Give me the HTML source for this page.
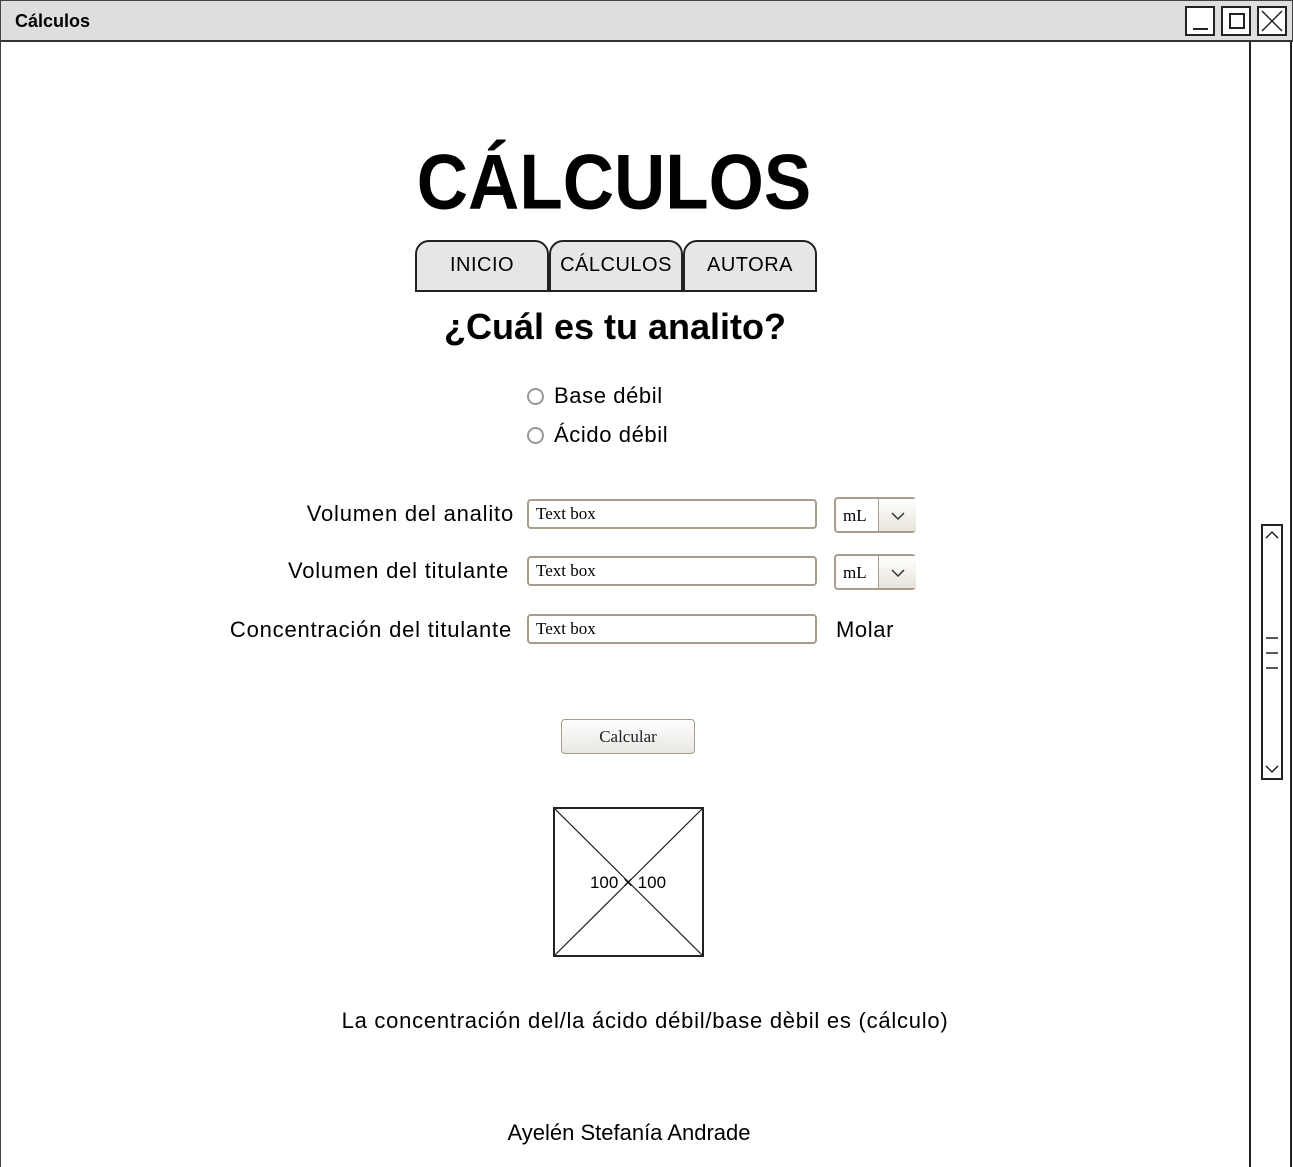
<!DOCTYPE html>
<html><head><meta charset="utf-8"><style>
*{margin:0;padding:0;box-sizing:border-box}
body{width:1293px;height:1167px;background:#fff;position:relative;overflow:hidden;font-family:"Comic Sans MS","Liberation Sans",sans-serif;color:#000}
.a{position:absolute}
.hand{font-family:"Comic Sans MS","Liberation Sans",sans-serif}
.tb{position:absolute;left:527px;width:290px;height:30px;border:2px solid #a89d8c;border-radius:4px;font-family:"Liberation Serif",serif;font-size:17px;padding:3px 0 0 7px;background:#fff}
.sel{position:absolute;left:834px;width:82px;height:36px;border:2px solid #a89d8c;border-radius:4px;background:#fff;font-family:"Liberation Serif",serif;font-size:17px}
.sel span{position:absolute;left:7px;top:7px}
.sel i{position:absolute;left:42px;top:0;width:38px;height:32px;border-left:1px solid #a89d8c;background:linear-gradient(#fff,#e8e4dc)}
.lbl{position:absolute;font-size:22px;text-align:right;width:320px;letter-spacing:0.8px}
.tab{position:absolute;top:240px;height:52px;border:2px solid #222;border-bottom:2px solid #222;border-radius:14px 14px 0 0;background:#e6e6e6;font-size:20px;text-align:center;padding-top:12px;letter-spacing:0.5px}
</style></head><body>
<div class="a" style="left:0;top:0;width:1293px;height:42px;background:#dedede;border:1px solid #444;border-bottom:2px solid #333"></div>
<div class="a hand" style="left:15px;top:11px;font-size:18px;font-weight:bold">Cálculos</div>
<div class="a" style="left:1185px;top:6px;width:30px;height:30px;border:2px solid #222;background:#fff"><div class="a" style="left:6px;top:20px;width:15px;height:2px;background:#222"></div></div>
<div class="a" style="left:1221px;top:6px;width:30px;height:30px;border:2px solid #222;background:#fff"><div class="a" style="left:6px;top:5px;width:16px;height:16px;border:2px solid #222"></div></div>
<div class="a" style="left:1257px;top:6px;width:30px;height:30px;border:2px solid #222;background:#fff"><svg width="26" height="26" class="a" style="left:0;top:0"><path d="M3 3L23 23M23 3L3 23" stroke="#222" stroke-width="1.5"/></svg></div>
<div class="a" style="left:0;top:42px;width:1px;height:1125px;background:#444"></div>
<div class="a" style="left:1249px;top:42px;width:2px;height:1125px;background:#222"></div>
<div class="a" style="left:1290px;top:42px;width:2px;height:1125px;background:#222"></div>
<div class="a" style="left:1261px;top:524px;width:22px;height:256px;border:2px solid #222"><svg width="18" height="252" class="a" style="left:0;top:0"><path d="M3 12L9 6L15 12M3 240L9 246L15 240M3 112H15M3 127H15M3 142H15" stroke="#222" stroke-width="1.5" fill="none"/></svg></div>

<div class="a" style="left:300px;top:142px;width:628px;text-align:center;font-family:'Liberation Sans',sans-serif;font-weight:bold;font-size:71px;transform:scaleY(1.1)">CÁLCULOS</div>
<div class="tab" style="left:415px;width:134px">INICIO</div>
<div class="tab" style="left:549px;width:134px">CÁLCULOS</div>
<div class="tab" style="left:683px;width:134px">AUTORA</div>
<div class="a" style="left:300px;top:306px;width:630px;text-align:center;font-family:'Liberation Sans',sans-serif;font-weight:bold;font-size:36px">¿Cuál es tu analito?</div>

<div class="a" style="left:527px;top:388px;width:17px;height:17px;border:2px solid #999;border-radius:50%"></div>
<div class="a" style="left:554px;top:383px;font-size:22px;letter-spacing:0.6px">Base débil</div>
<div class="a" style="left:527px;top:427px;width:17px;height:17px;border:2px solid #999;border-radius:50%"></div>
<div class="a" style="left:554px;top:422px;font-size:22px;letter-spacing:0.6px">Ácido débil</div>

<div class="lbl" style="left:194px;top:501px">Volumen del analito</div>
<div class="lbl" style="left:189px;top:558px">Volumen del titulante</div>
<div class="lbl" style="left:192px;top:617px">Concentración del titulante</div>
<div class="tb" style="top:499px">Text box</div>
<div class="tb" style="top:556px">Text box</div>
<div class="tb" style="top:614px">Text box</div>
<div class="sel" style="top:497px"><span>mL</span><i><svg width="38" height="32"><path d="M13 14L19 20L25 14" stroke="#333" stroke-width="1.5" fill="none"/></svg></i></div>
<div class="sel" style="top:554px"><span>mL</span><i><svg width="38" height="32"><path d="M13 14L19 20L25 14" stroke="#333" stroke-width="1.5" fill="none"/></svg></i></div>
<div class="a" style="left:836px;top:617px;font-size:22px;letter-spacing:0.6px">Molar</div>

<div class="a" style="left:561px;top:719px;width:134px;height:35px;border:1px solid #a89d8c;border-radius:4px;background:linear-gradient(#fff,#e8e6e2);font-family:'Liberation Serif',serif;font-size:17px;text-align:center;padding-top:7px;color:#222">Calcular</div>

<div class="a" style="left:553px;top:807px;width:151px;height:150px;border:2px solid #222;background:#fff"><svg width="147" height="146" class="a" style="left:0;top:0"><path d="M0 0L147 146M147 0L0 146" stroke="#222" stroke-width="1.2"/></svg><div class="a" style="left:28px;top:64px;width:90px;text-align:center;font-size:17px;background:transparent">100 × 100</div></div>

<div class="a" style="left:250px;top:1008px;width:790px;text-align:center;font-size:22px;letter-spacing:0.75px">La concentración del/la ácido débil/base dèbil es (cálculo)</div>
<div class="a" style="left:400px;top:1120px;width:458px;text-align:center;font-family:'Liberation Sans',sans-serif;font-size:22px">Ayelén Stefanía Andrade</div>
</body></html>
